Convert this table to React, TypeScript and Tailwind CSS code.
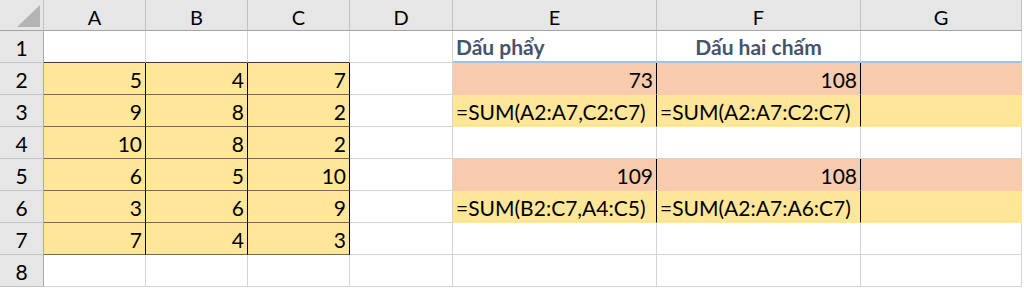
import React from "react";

const font = { fontFamily: "Lato, 'Noto Sans', sans-serif" };

// cell kinds -> full class strings
const kinds: Record<string, string> = {
  blank: "bg-white border-r border-b border-r-[#d4d4d4] border-b-[#d4d4d4]",
  topData: "bg-white border-r border-b border-r-[#d4d4d4] border-b-[#3a3a3a]",
  head: "bg-white border-r border-b-2 border-r-[#d4d4d4] border-b-[#9dc3e6] font-bold text-[#44546a]",
  data: "bg-[#ffe699] border-r border-b border-r-black border-b-[#766b50] justify-end pr-[3px]",
  sumE: "bg-[#f8cbad] border-r border-b border-r-black border-b-[#f8cbad] justify-end pr-[3px]",
  sumG: "bg-[#f8cbad] border-r border-b border-r-[#f8cbad] border-b-[#f8cbad]",
  fE: "bg-[#ffe699] border-r border-b border-r-black border-b-[#ffe699] pl-[3px]",
  fG: "bg-[#ffe699] border-r border-b border-r-[#ffe699] border-b-[#ffe699]",
};

type Cell = [string, string];

const rows: Cell[][] = [
  [["", "topData"], ["", "topData"], ["", "topData"], ["", "blank"], ["Dấu phẩy", "head"], ["Dấu hai chấm", "head"], ["", "head"]],
  [["5", "data"], ["4", "data"], ["7", "data"], ["", "blank"], ["73", "sumE"], ["108", "sumE"], ["", "sumG"]],
  [["9", "data"], ["8", "data"], ["2", "data"], ["", "blank"], ["=SUM(A2:A7,C2:C7)", "fE"], ["=SUM(A2:A7:C2:C7)", "fE"], ["", "fG"]],
  [["10", "data"], ["8", "data"], ["2", "data"], ["", "blank"], ["", "blank"], ["", "blank"], ["", "blank"]],
  [["6", "data"], ["5", "data"], ["10", "data"], ["", "blank"], ["109", "sumE"], ["108", "sumE"], ["", "sumG"]],
  [["3", "data"], ["6", "data"], ["9", "data"], ["", "blank"], ["=SUM(B2:C7,A4:C5)", "fE"], ["=SUM(A2:A7:A6:C7)", "fE"], ["", "fG"]],
  [["7", "data"], ["4", "data"], ["3", "data"], ["", "blank"], ["", "blank"], ["", "blank"], ["", "blank"]],
  [["", "blank"], ["", "blank"], ["", "blank"], ["", "blank"], ["", "blank"], ["", "blank"], ["", "blank"]],
];

const cols = ["A", "B", "C", "D", "E", "F", "G"];

function Corner() {
  return (
    <div className="bg-[#e6e6e6] border-r border-b border-r-[#c0c0c0] border-b-[#a3a3a3] flex items-end justify-end pr-[3px] pb-[3px]">
      <svg width="23" height="22" viewBox="0 0 23 22">
        <polygon points="23,0 23,22 0,22" fill="#b4b4b4" />
      </svg>
    </div>
  );
}

export default function App() {
  return (
    <div className="w-[1024px] h-[288px] bg-white overflow-hidden text-black" style={font}>
      <div className="grid grid-cols-[44px_102px_102px_102px_103px_204px_204px_161px_4px] grid-rows-[31px_repeat(8,32px)]">
        <Corner />
        {cols.map((c) => (
          <div
            key={c}
            className="bg-[#e6e6e6] border-r border-b border-r-[#c0c0c0] border-b-[#a3a3a3] flex items-center justify-center text-[20px] pt-[3px]"
          >
            {c}
          </div>
        ))}
        <div className="bg-white" />
        {rows.map((r, i) => (
          <React.Fragment key={i}>
            <div className="bg-[#e6e6e6] border-r border-b border-r-[#ababab] border-b-[#c4c4c4] flex items-end justify-center pb-[4px] text-[21px] leading-none">
              {i + 1}
            </div>
            {r.map(([t, k], j) => (
              <div
                key={j}
                className={`${kinds[k]} flex items-end pb-[4px] text-[21px] leading-none whitespace-nowrap ${
                  k === "head" && j === 5 ? "justify-center" : ""
                } ${k === "head" && j === 4 ? "pl-[3px]" : ""}`}
              >
                {t}
              </div>
            ))}
            <div className="bg-white" />
          </React.Fragment>
        ))}
      </div>
    </div>
  );
}
